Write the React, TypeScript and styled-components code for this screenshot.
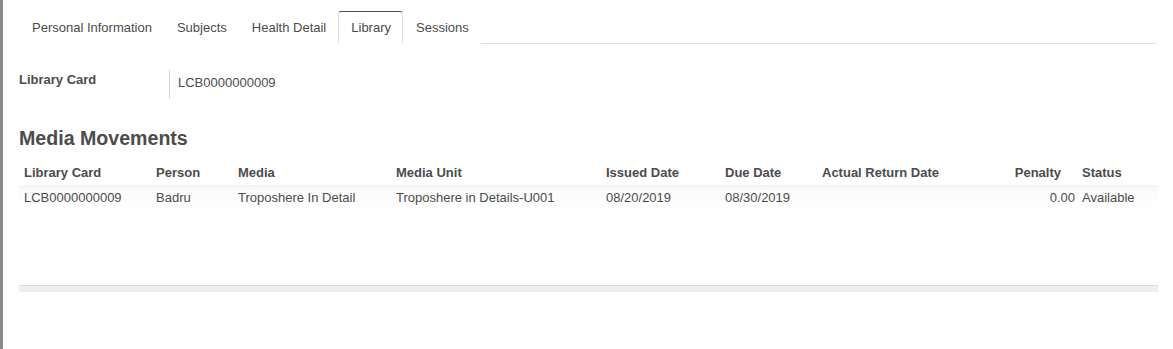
import React from "react";
import styled, { createGlobalStyle } from "styled-components";

const GlobalStyle = createGlobalStyle`
  html, body {
    margin: 0;
    padding: 0;
    background: #fff;
  }
  body {
    font-family: "Liberation Sans", Arial, sans-serif;
    font-size: 13px;
    color: #4c4c4c;
  }
`;

const tabs = ["Personal Information", "Subjects", "Health Detail", "Library", "Sessions"];

const columns = [
  { key: "card", label: "Library Card", width: 132 },
  { key: "person", label: "Person", width: 82 },
  { key: "media", label: "Media", width: 158 },
  { key: "unit", label: "Media Unit", width: 210 },
  { key: "issued", label: "Issued Date", width: 119 },
  { key: "due", label: "Due Date", width: 97 },
  { key: "actual", label: "Actual Return Date", width: 163 },
  { key: "penalty", label: "Penalty", width: 97, right: true },
  { key: "status", label: "Status", width: 81 },
];

const rows = [
  {
    card: "LCB0000000009",
    person: "Badru",
    media: "Troposhere In Detail",
    unit: "Troposhere in Details-U001",
    issued: "08/20/2019",
    due: "08/30/2019",
    actual: "",
    penalty: "0.00",
    status: "Available",
  },
];

const App = () => {
  return (
    <>
      <GlobalStyle />
      <PageStyle>
        <SheetStyle>
          <TabBarStyle>
            {tabs.map((t) => (
              <TabStyle key={t} active={t === "Library"}>
                {t}
              </TabStyle>
            ))}
          </TabBarStyle>

          <FieldRowStyle>
            <FieldLabelStyle>Library Card</FieldLabelStyle>
            <FieldValueStyle>LCB0000000009</FieldValueStyle>
          </FieldRowStyle>

          <SectionTitleStyle>Media Movements</SectionTitleStyle>

          <TableStyle>
            <colgroup>
              {columns.map((c) => (
                <col key={c.key} style={{ width: c.width }} />
              ))}
            </colgroup>
            <thead>
              <tr>
                {columns.map((c) => (
                  <HeadCellStyle key={c.key} right={c.right}>
                    {c.label}
                  </HeadCellStyle>
                ))}
              </tr>
            </thead>
            <tbody>
              {rows.map((r, i) => (
                <BodyRowStyle key={i}>
                  {columns.map((c) => (
                    <CellStyle key={c.key} right={c.right}>
                      {r[c.key as keyof typeof r]}
                    </CellStyle>
                  ))}
                </BodyRowStyle>
              ))}
              <tr>
                <EmptyCellStyle colSpan={columns.length} />
              </tr>
            </tbody>
            <tfoot>
              <tr>
                <FootCellStyle colSpan={columns.length} />
              </tr>
            </tfoot>
          </TableStyle>
        </SheetStyle>
      </PageStyle>
    </>
  );
};

export default App;

const PageStyle = styled.div`
  min-height: 349px;
  border-left: 3px solid #8a8a8a;
  box-sizing: border-box;
`;

const SheetStyle = styled.div`
  padding: 11px 16px 0 16px;
`;

const TabBarStyle = styled.div`
  display: flex;
  border-bottom: 1px solid #dee2e6;
`;

const TabStyle = styled.div<{ active?: boolean }>`
  height: 31px;
  line-height: 31px;
  padding: 0 11px 0 12px;
  margin-bottom: -1px;
  color: #4c4c4c;
  border: 1px solid ${(p) => (p.active ? "#dee2e6" : "transparent")};
  border-top-color: ${(p) => (p.active ? "#4c4c4c" : "transparent")};
  border-bottom-color: ${(p) => (p.active ? "#fff" : "transparent")};
  background: #fff;
  border-radius: 3px 3px 0 0;
`;

const FieldRowStyle = styled.div`
  display: flex;
  margin-top: 26px;
  height: 29px;
`;

const FieldLabelStyle = styled.div`
  width: 150px;
  font-weight: bold;
  padding-top: 2px;
`;

const FieldValueStyle = styled.div`
  border-left: 1px solid #d6d6d6;
  padding: 5px 8px 0;
`;

const SectionTitleStyle = styled.h2`
  margin: 27px 0 0;
  font-size: 19.6px;
  font-weight: bold;
  color: #4c4c4c;
  line-height: 24px;
`;

const TableStyle = styled.table`
  width: 1138px;
  table-layout: fixed;
  border-collapse: collapse;
  margin-top: 10px;
`;

const HeadCellStyle = styled.th<{ right?: boolean }>`
  text-align: ${(p) => (p.right ? "right" : "left")};
  font-weight: bold;
  padding: 0 ${(p) => (p.right ? "16px" : "5px")} 0 5px;
  height: 25px;
  white-space: nowrap;
`;

const BodyRowStyle = styled.tr`
  background: linear-gradient(to bottom, #f3f3f3 0px, #fbfbfb 6px, #fff 25px);
`;

const CellStyle = styled.td<{ right?: boolean }>`
  text-align: ${(p) => (p.right ? "right" : "left")};
  padding: 0 ${(p) => (p.right ? "2px" : "5px")} 0 5px;
  height: 25px;
  white-space: nowrap;
`;

const EmptyCellStyle = styled.td`
  height: 75px;
  padding: 0;
`;

const FootCellStyle = styled.td`
  height: 6px;
  padding: 0;
  background: #eeeeee;
  border-top: 1px solid #dcdcdc;
`;
